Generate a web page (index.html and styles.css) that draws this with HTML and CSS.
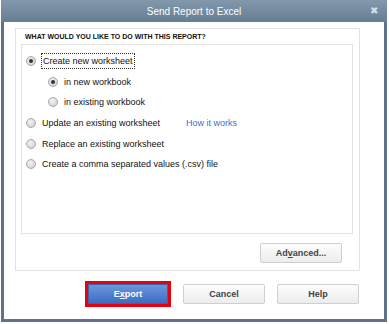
FILE: index.html
```html
<!DOCTYPE html>
<html lang="en">
<head>
  <meta charset="UTF-8" />
  <title>Send Report to Excel</title>
  <link rel="stylesheet" href="styles.css">
</head>
<body>
  <div class="dialog">
    <div class="titlebar">
      <span class="title">Send Report to Excel</span>
      <span class="close">&#10006;</span>
    </div>
    <div class="dialog-body">
      <div class="group">
        <div class="group-title">WHAT WOULD YOU LIKE TO DO WITH THIS REPORT?</div>
        <div class="options">
          <label class="option">
            <span class="radio checked"></span>
            <span class="focused">Create new worksheet</span>
          </label>
          <label class="option sub">
            <span class="radio checked"></span>
            <span>in new workbook</span>
          </label>
          <label class="option sub">
            <span class="radio"></span>
            <span>in existing workbook</span>
          </label>
          <label class="option">
            <span class="radio"></span>
            <span>Update an existing worksheet</span>
            <a class="link" href="#">How it works</a>
          </label>
          <label class="option">
            <span class="radio"></span>
            <span>Replace an existing worksheet</span>
          </label>
          <label class="option">
            <span class="radio"></span>
            <span>Create a comma separated values (.csv) file</span>
          </label>
        </div>
        <div class="group-actions">
          <button class="btn">Ad<u>v</u>anced...</button>
        </div>
      </div>
      <div class="footer">
        <div class="highlight">
          <button class="btn primary">E<u>x</u>port</button>
        </div>
        <button class="btn">Cancel</button>
        <button class="btn">Help</button>
      </div>
    </div>
  </div>
</body>
</html>
```

FILE: styles.css
```css
body {
  margin: 0;
  background-color: #fff;
  font-family: 'Liberation Sans', Arial, sans-serif;
  color: #222;
}

.dialog {
  width: 386px;
  height: 322px;
  margin-left: 1px;
  padding: 0 3px 3px 3px;
  box-sizing: border-box;
  background-color: #5e7389;
  display: flex;
  flex-direction: column;
}

.titlebar {
  height: 22px;
  margin: 0 -3px;
  background: linear-gradient(#8298ad, #667d93);
  color: #fff;
  display: flex;
  align-items: center;
  justify-content: center;
  position: relative;
}

.title {
  font-size: 10px;
}

.close {
  position: absolute;
  right: 9px;
  top: 5px;
  font-size: 10px;
  color: #d6dee6;
}

.dialog-body {
  flex-grow: 1;
  background-color: #fff;
  padding: 6px 0 0 11px;
}

.group {
  width: 345px;
  height: 243px;
  box-sizing: border-box;
  border: 1px solid #e2e2e2;
  padding: 4px 6px 0 5px;
}

.group-title {
  font-size: 7px;
  font-weight: bold;
  color: #111;
  margin-left: 4px;
  height: 11px;
}

.options {
  height: 190px;
  box-sizing: border-box;
  border: 1px solid #e2e2e2;
  padding: 6px 0 0 4px;
}

.option {
  display: flex;
  align-items: center;
  height: 20.6px;
  font-size: 9px;
  color: #111;
}

.option.sub {
  padding-left: 22px;
}

.radio {
  width: 10px;
  height: 10px;
  border-radius: 50%;
  border: 1px solid #a8a8a8;
  background: radial-gradient(circle at 40% 35%, #f4f4f4, #c9c9c9);
  margin-right: 6px;
  box-sizing: border-box;
  flex-shrink: 0;
  display: flex;
  align-items: center;
  justify-content: center;
}

.radio.checked::after {
  content: "";
  width: 4px;
  height: 4px;
  border-radius: 50%;
  background-color: #333;
}

.focused {
  outline: 1px dotted #333;
  padding: 2px 1px;
}

.link {
  margin-left: 26px;
  color: #3b6fcf;
  text-decoration: none;
}

.group-actions {
  display: flex;
  justify-content: flex-end;
  padding: 9px 11px 0 0;
}

.btn {
  width: 82px;
  height: 20px;
  border: 1px solid #cfcfcf;
  border-radius: 2px;
  background: linear-gradient(#fdfdfd, #ececec);
  font-family: 'Liberation Sans', Arial, sans-serif;
  font-size: 9px;
  font-weight: bold;
  color: #444;
  padding: 0;
}

.footer {
  display: flex;
  align-items: center;
  gap: 12px;
  padding: 10px 0 0 70px;
}

.highlight {
  border: 3px solid #e8000b;
  line-height: 0;
}

.btn.primary {
  width: 80px;
  border: 1px solid #3a63b3;
  border-radius: 0;
  background: linear-gradient(#6a95dd, #3d6cc4);
  color: #fff;
}
```
